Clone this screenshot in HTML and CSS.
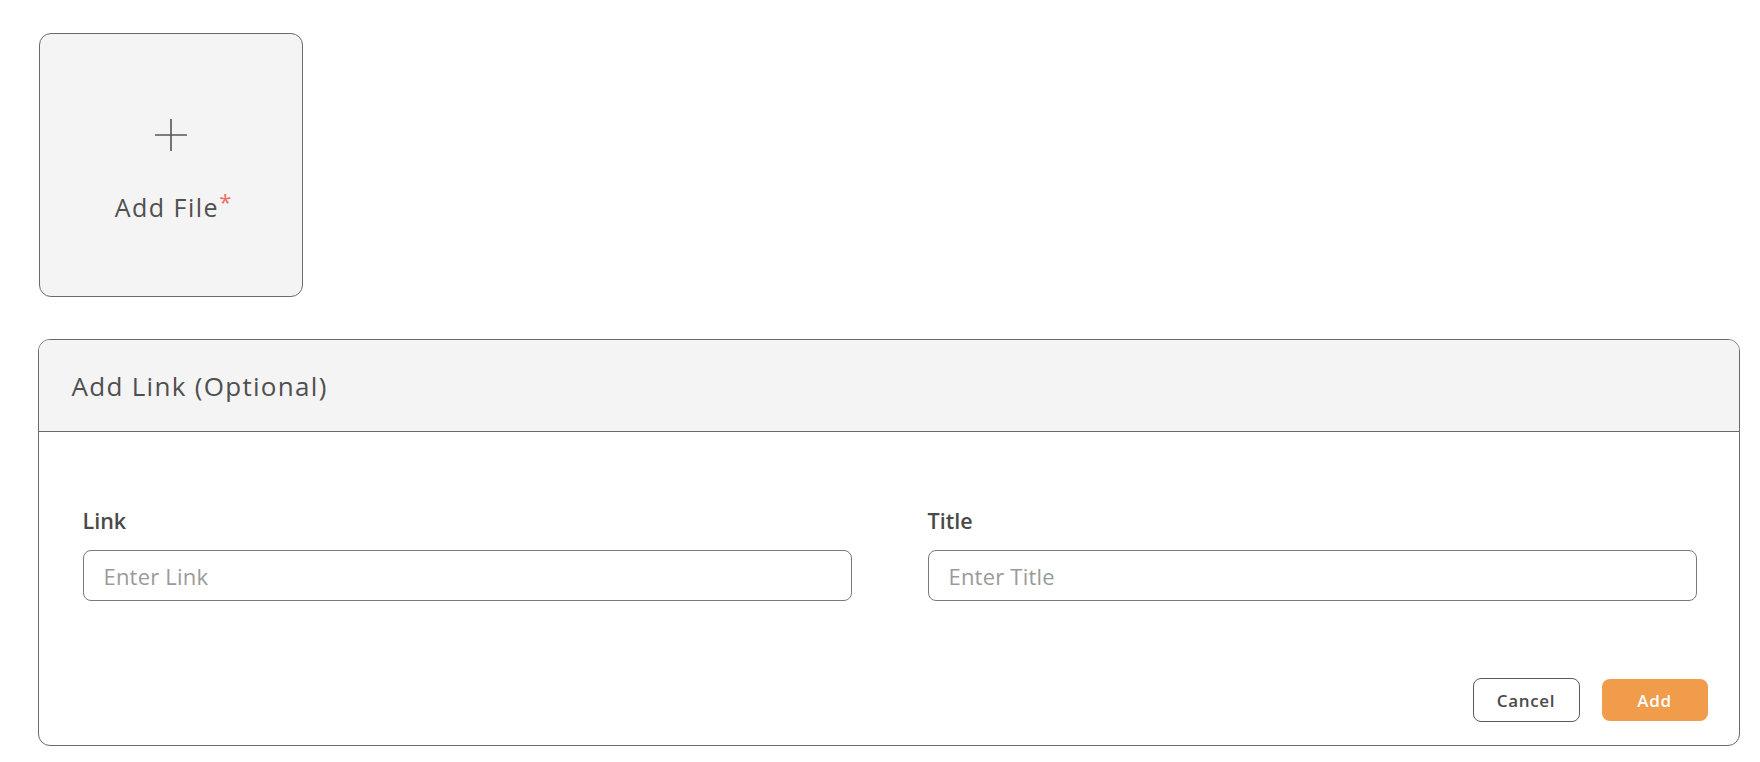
FILE: index.html
```html
<!DOCTYPE html>
<html lang="en">
<head>
<meta charset="utf-8">
<title>Add File</title>
<link rel="stylesheet" href="styles.css">
</head>
<body>
<main class="page">
  <button class="upload" type="button">
    <svg class="upload-icon" width="34" height="34" viewBox="0 0 34 34" aria-hidden="true">
      <path d="M17 1V33M1 17H33" stroke="#555" stroke-width="1.6" fill="none"/>
    </svg>
    <span class="upload-label">Add File<span class="req">*</span></span>
  </button>

  <section class="panel">
    <header class="panel-head">Add Link (Optional)</header>
    <div class="panel-body">
      <div class="fields">
        <label class="field">
          <span class="field-label">Link</span>
          <input class="input" type="text" placeholder="Enter Link">
        </label>
        <label class="field">
          <span class="field-label">Title</span>
          <input class="input" type="text" placeholder="Enter Title">
        </label>
      </div>
      <div class="actions">
        <button class="btn btn-cancel" type="button">Cancel</button>
        <button class="btn btn-add" type="button">Add</button>
      </div>
    </div>
  </section>
</main>
</body>
</html>
```

FILE: styles.css
```css
* { box-sizing: border-box; }
html, body { margin: 0; padding: 0; background: #fff; }
body {
  font-family: "Open Sans", "DejaVu Sans", sans-serif;
  color: #4d4d4d;
}
.page {
  padding: 33px 20px 0 38px;
  display: flex;
  flex-direction: column;
  align-items: flex-start;
}
.upload {
  margin-left: 1px;
  width: 264px;
  height: 264px;
  background: #f4f4f4;
  border: 1.5px solid #6a6a6a;
  border-radius: 12px;
  display: flex;
  flex-direction: column;
  align-items: center;
  padding: 84px 0 0;
  font-family: inherit;
  cursor: pointer;
}
.upload-icon { display: block; }
.upload-label {
  margin-top: 34px;
  font-size: 25px;
  line-height: 30px;
  letter-spacing: 1.5px;
  color: #4f4f4f;
  font-weight: 400;
  white-space: nowrap;
  padding-left: 4px;
}
.req { color: #f06b5d; font-size: 22px; vertical-align: 7px; letter-spacing: 0; }

.panel {
  margin-top: 42px;
  width: 1702px;
  border: 1.5px solid #6a6a6a;
  border-radius: 12px;
  overflow: hidden;
}
.panel-head {
  height: 92px;
  background: #f4f4f4;
  border-bottom: 1.5px solid #6a6a6a;
  display: flex;
  align-items: center;
  padding-left: 32.5px;
  font-size: 26px;
  letter-spacing: 1.3px;
  color: #4f4f4f;
}
.panel-body {
  padding: 76px 31.5px 22.5px 43.5px;
  display: flex;
  flex-direction: column;
}
.fields {
  display: grid;
  grid-template-columns: 1fr 1fr;
  column-gap: 76px;
  padding-right: 11px;
}
.field { display: flex; flex-direction: column; }
.field-label {
  font-size: 21.5px;
  line-height: 26px;
  font-weight: 600;
  color: #4a4a4a;
  margin-bottom: 16px;
}
.input {
  height: 51px;
  border: 1.5px solid #7a7a7a;
  border-radius: 8px;
  padding: 0 20px;
  font-family: inherit;
  font-size: 22px;
  letter-spacing: 0.2px;
  color: #4a4a4a;
  background: #fff;
  outline: none;
}
.input::placeholder { color: #9a9a9a; }
.actions {
  margin-top: 77px;
  display: flex;
  justify-content: flex-end;
  align-items: center;
  gap: 22px;
}
.btn {
  border-radius: 8px;
  font-family: inherit;
  font-size: 17px;
  font-weight: 600;
  letter-spacing: 0.7px;
  cursor: pointer;
}
.btn-cancel {
  width: 107px;
  height: 44px;
  background: #fff;
  border: 1.5px solid #5a5a5a;
  color: #4a4a4a;
}
.btn-add {
  width: 106px;
  height: 42px;
  background: #f09c4b;
  border: none;
  color: #fff;
}
```
